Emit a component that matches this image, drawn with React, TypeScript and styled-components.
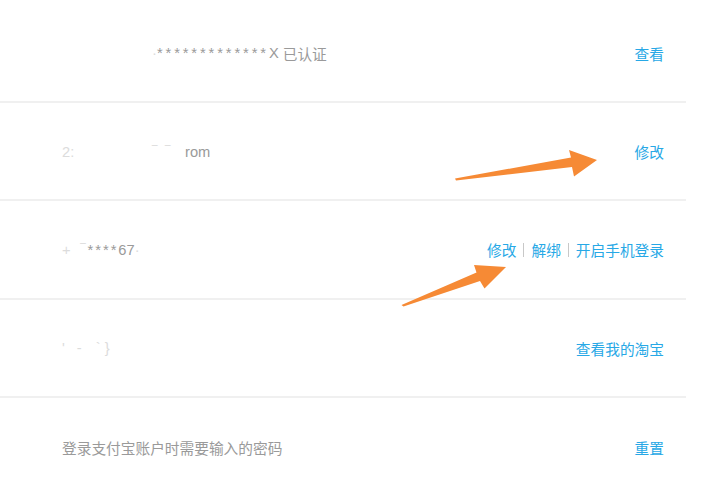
import styled, { createGlobalStyle } from 'styled-components';

const GlobalStyle = createGlobalStyle`
  html, body {
    margin: 0;
    padding: 0;
    background: #ffffff;
  }
  body {
    font-family: "Liberation Sans", "Noto Sans CJK SC", sans-serif;
  }
`;

const Page = styled.div`
  position: relative;
  width: 719px;
  height: 479px;
  overflow: hidden;
  padding-top: 4.7px;
  box-sizing: border-box;
`;

const List = styled.div`
  width: 686px;
`;

const Row = styled.div<{ $last?: boolean }>`
  display: flex;
  align-items: center;
  justify-content: space-between;
  height: 98.3px;
  box-sizing: border-box;
  padding: 1px 22px 0 62px;
  border-bottom: ${(p) => (p.$last ? 'none' : '2px solid #f0f0f0')};
`;

const Info = styled.div`
  display: flex;
  align-items: center;
  color: #9a9a9a;
  font-size: 14.7px;
  white-space: nowrap;
`;

// 被遮盖的个人信息
const Masked = styled.span<{ $w: number }>`
  display: inline-block;
  width: ${(p) => p.$w}px;
`;

const Faint = styled.span`
  color: #dcdcdc;
`;

const Stars = styled.span<{ $spacing: number }>`
  letter-spacing: ${(p) => p.$spacing}px;
`;

const Actions = styled.div`
  display: flex;
  align-items: center;
  font-size: 14.7px;
  font-family: "Noto Sans CJK SC", sans-serif;
  white-space: nowrap;
`;

const Action = styled.a`
  color: #27a8e6;
  text-decoration: none;
  cursor: pointer;
`;

const Sep = styled.span`
  display: inline-block;
  width: 1px;
  height: 14px;
  margin: 0 7px;
  background: #c8c8c8;
`;

const Cjk = styled.span<{ $gap?: number }>`
  font-family: "Noto Sans CJK SC", sans-serif;
  margin-left: ${(p) => p.$gap ?? 0}px;
`;

const Overlay = styled.svg`
  position: absolute;
  left: 0;
  top: 0;
  pointer-events: none;
`;

const App = () => {
  return (
    <Page>
      <GlobalStyle />
      <List>
        <Row>
          <Info>
            <Masked $w={90} />
            <Faint>·</Faint>
            <Stars $spacing={2.9}>*************</Stars>X<Cjk $gap={4}>已认证</Cjk>
          </Info>
          <Actions>
            <Action>查看</Action>
          </Actions>
        </Row>
        <Row>
          <Info>
            <Faint>2:</Faint>
            <Masked $w={78} />
            <Faint>‾</Faint>
            <Masked $w={8} />
            <Faint>‾</Faint>
            <Masked $w={15} />
            rom
          </Info>
          <Actions>
            <Action>修改</Action>
          </Actions>
        </Row>
        <Row>
          <Info>
            <Faint>+</Faint>
            <Masked $w={10} />
            <Faint>‾</Faint>
            <Masked $w={2} />
            <Stars $spacing={2}>****</Stars>67<Faint>·</Faint>
          </Info>
          <Actions>
            <Action>修改</Action>
            <Sep />
            <Action>解绑</Action>
            <Sep />
            <Action>开启手机登录</Action>
          </Actions>
        </Row>
        <Row>
          <Info>
            <Faint>'</Faint>
            <Masked $w={12} />
            <Faint>-</Faint>
            <Masked $w={14} />
            <Faint>`</Faint>
            <Masked $w={4} />
            <Faint>{'}'}</Faint>
          </Info>
          <Actions>
            <Action>查看我的淘宝</Action>
          </Actions>
        </Row>
        <Row $last>
          <Info>
            <Cjk>登录支付宝账户时需要输入的密码</Cjk>
          </Info>
          <Actions>
            <Action>重置</Action>
          </Actions>
        </Row>
      </List>
      <Overlay width={719} height={479} viewBox="0 0 719 479">
        <polygon
          points="455,178.5 571,157.5 569,150 597,160 574,176.5 572,167 456,180.5"
          fill="#f68a35"
        />
        <polygon
          points="401.5,305 476.5,272.5 474,265 506,267 484.5,288.5 480,281 403.5,306.5"
          fill="#f68a35"
        />
      </Overlay>
    </Page>
  );
};

export default App;
